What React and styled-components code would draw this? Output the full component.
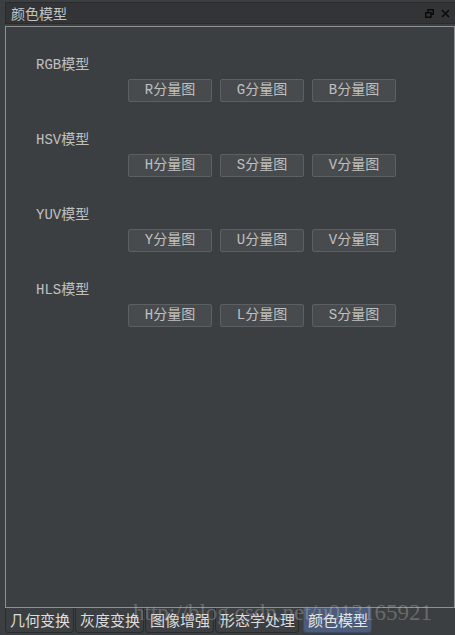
import React from "react";
import styled, { createGlobalStyle } from "styled-components";

const Global = createGlobalStyle`
  html, body { margin: 0; padding: 0; background: #3c3f41; }
  body { width: 455px; height: 635px; overflow: hidden; }
`;

const Frame = styled.div`
  position: relative;
  width: 455px;
  height: 635px;
  display: flex;
  flex-direction: column;
  background: #3c3f41;
  font-family: "Liberation Mono", "Noto Sans CJK SC", monospace;
  color: #bbbbbb;
`;

const TitleBar = styled.div`
  margin: 2px 0 0 5px;
  height: 20px;
  background: #323436;
  border: 1px solid #2a2b2c;
  border-right: none;
  display: flex;
  align-items: center;
  padding-left: 5px;
  font-family: "Noto Sans CJK SC", sans-serif;
  font-size: 14px;
  color: #c4c4c4;
`;

const TitleText = styled.span`
  flex: 1;
  line-height: 20px;
`;

const TitleIcons = styled.div`
  display: flex;
  gap: 7px;
  align-items: center;
  padding-right: 5px;
`;

const Panel = styled.div`
  margin: 2px 0 0 5px;
  flex: 1;
  border: 1px solid #8e9092;
  padding: 30px 0 0 30px;
  display: flex;
  flex-direction: column;
  gap: 30px;
`;

const Section = styled.div`
  display: flex;
  flex-direction: column;
  gap: 6px;
`;

const Label = styled.div`
  font-size: 14px;
  line-height: 16px;
  height: 16px;
  color: #c0c0c0;
`;

const ButtonRow = styled.div`
  display: flex;
  gap: 8px;
  margin-left: 92px;
`;

const Btn = styled.button`
  width: 84px;
  height: 23px;
  padding: 0;
  box-sizing: border-box;
  background: #474b4e;
  border: 1px solid #5c6062;
  border-radius: 2px;
  color: #c0c0c0;
  font-family: "Liberation Mono", "Noto Sans CJK SC", monospace;
  font-size: 14px;
  line-height: 21px;
`;

const TabBar = styled.div`
  height: 27px;
  display: flex;
  align-items: flex-start;
  padding-left: 5px;
  gap: 1px;
`;

const Tab = styled.div`
  height: 25px;
  box-sizing: border-box;
  padding: 0 3px 0 4px;
  margin-left: ${(p) => (p.$active ? "3px" : "0")};
  border: 1px solid ${(p) => (p.$active ? "#3d4a63" : "#2a2c2d")};
  border-top: none;
  border-radius: 0 0 4px 4px;
  background: ${(p) => (p.$active ? "#4b5b79" : "#3c3f41")};
  color: ${(p) => (p.$active ? "#e6e6e6" : "#dcdcdc")};
  font-family: "Noto Sans CJK SC", sans-serif;
  font-size: 15px;
  line-height: 23px;
  white-space: nowrap;
`;

const Watermark = styled.div`
  position: absolute;
  left: 133px;
  top: 600px;
  font-family: "Liberation Serif", serif;
  font-size: 23px;
  color: rgba(200, 200, 200, 0.33);
  pointer-events: none;
  white-space: nowrap;
`;

const models = [
  { name: "RGB模型", parts: ["R", "G", "B"] },
  { name: "HSV模型", parts: ["H", "S", "V"] },
  { name: "YUV模型", parts: ["Y", "U", "V"] },
  { name: "HLS模型", parts: ["H", "L", "S"] },
];

const tabs = ["几何变换", "灰度变换", "图像增强", "形态学处理", "颜色模型"];

export default function App() {
  return (
    <>
      <Global />
      <Frame>
        <TitleBar>
          <TitleText>颜色模型</TitleText>
          <TitleIcons>
            <svg width="9" height="9" viewBox="0 0 9 9">
              <rect x="3" y="0.75" width="5.25" height="4.5" fill="none" stroke="#0b0b0b" strokeWidth="1.5" />
              <rect x="0.75" y="3.75" width="5.25" height="4.5" fill="#323436" stroke="#0b0b0b" strokeWidth="1.5" />
            </svg>
            <svg width="9" height="9" viewBox="0 0 9 9">
              <path d="M1 1 L8 8 M8 1 L1 8" stroke="#0b0b0b" strokeWidth="1.6" />
            </svg>
          </TitleIcons>
        </TitleBar>
        <Panel>
          {models.map((m) => (
            <Section key={m.name}>
              <Label>{m.name}</Label>
              <ButtonRow>
                {m.parts.map((p) => (
                  <Btn key={p}>{p}分量图</Btn>
                ))}
              </ButtonRow>
            </Section>
          ))}
        </Panel>
        <TabBar>
          {tabs.map((t, i) => (
            <Tab key={t} $active={i === 4}>
              {t}
            </Tab>
          ))}
        </TabBar>
        <Watermark>http://blog.csdn.net/u013165921</Watermark>
      </Frame>
    </>
  );
}
